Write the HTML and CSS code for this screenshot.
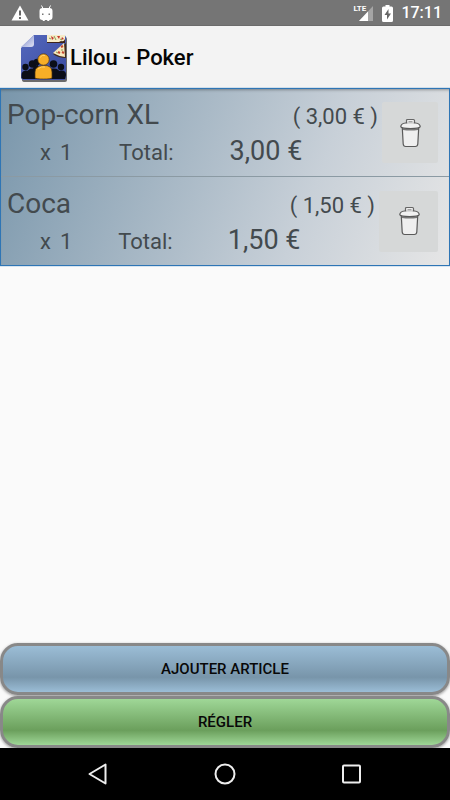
FILE: index.html
```html
<!DOCTYPE html>
<html lang="fr">
<head>
<meta charset="utf-8">
<meta name="viewport" content="width=device-width, initial-scale=1">
<title>Lilou - Poker</title>
<link rel="stylesheet" href="styles.css">
</head>
<body>
<svg class="defs" aria-hidden="true">
  <symbol id="trash" viewBox="0 0 22 30">
    <path d="M7.500 6V2.500q0-1 1-1h6q1 0 1 1V6" fill="#eee" stroke="#666" stroke-width="1.200"/>
    <path d="M9.500 4.300h4" stroke="#555" stroke-width="1.600"/>
    <path d="M3.300 10l.9 16q.2 2.500 2.500 2.500h9.600q2.300 0 2.500-2.500l.9-16z" fill="#efefef" stroke="#5a5a5a" stroke-width="1.200"/>
    <path d="M4 11.200q7.500 1 15 0" fill="none" stroke="#777" stroke-width="1.600"/>
    <path d="M1.800 8.800q0-3.300 4.700-3.800h10q4.700.5 4.700 3.800-.7 1.700-9.700 1.700T1.800 8.800z" fill="#f1f1f1" stroke="#5a5a5a" stroke-width="1.200"/>
    <path d="M8.200 5h6.600" stroke="#f1f1f1" stroke-width="1.400"/>
  </symbol>
</svg>
<div class="screen">
  <div class="status">
    <div class="status-group">
      <svg width="18" height="16" viewBox="0 0 18 16"><path d="M9 .5L17.500 15.500H.5z" fill="#fff"/><path d="M8 5.500h2v5H8zM8 12h2v2H8z" fill="#666"/></svg>
      <svg width="14" height="17" viewBox="0 0 14 17"><path d="M2.500.5l1.500 3M11.500.5L10 3.500" stroke="#fff"/><path d="M.5 6q0-3 3-3h7q3 0 3 3v6q0 3-3 3l-.5 1H8.500l-.5-1H6l-.5 1H4l-.5-1q-3 0-3-3z" fill="#fff"/><path d="M3 8.500h1.500V10H3zM9.500 8.500H11V10H9.500z" fill="#777"/></svg>
    </div>
    <div class="status-group status-right">
      <span class="signal"><svg width="14" height="15" viewBox="0 0 14 15"><path d="M14 0v15H0z" fill="#a5a5a5"/><path d="M9 5.500V15H0z" fill="#fff"/></svg><span class="lte">LTE</span></span>
      <svg width="11" height="17" viewBox="0 0 11 17"><path d="M3.500 0h4v1.500h2q1.500 0 1.500 1.500v12.500q0 1.500-1.500 1.500h-8Q0 17 0 15.500V3q0-1.500 1.500-1.500h2z" fill="#fff"/><path d="M6.500 4L2.500 10H5v4.500l4-6H6.500z" fill="#666"/></svg>
      <span class="clock">17:11</span>
    </div>
  </div>
  <header class="header">
    <svg class="logo" width="48" height="48" viewBox="0 0 48 48">
      <defs>
        <linearGradient id="blue" x2="1" y2="1"><stop stop-color="#5468bd"/><stop offset="1" stop-color="#3b4ca0"/></linearGradient>
        <linearGradient id="fold" x1="1" y1="1" x2="0" y2="0"><stop offset=".1" stop-color="#d6daf0"/><stop offset=".8" stop-color="#8c98d0"/></linearGradient>
      </defs>
      <path d="M14 3h31q2 0 2 2v41q0 2-2 2H5q-3 0-3-2V16z" fill="#222" opacity=".65"/>
      <path d="M14 1h29q3 0 3 3v39q0 3-3 3H4q-3 0-3-3V14z" fill="url(#blue)"/>
      <path d="M14 1v9q0 3-3 3H1z" fill="url(#fold)"/>
      <path d="M27 1h18v8H27z" fill="#3d241a"/>
      <path d="M27 1h18v4q-1 3-4 2l-2 1H27z" fill="#f6ecc8"/>
      <path d="M31 2l3 2-2 2zM37 2l3 0-1 3zM42 3l2 2-3 1z" fill="#c5372d"/><path d="M34 2l2 4M29 4l2 1M40 5l2 1" stroke="#8d9c55"/>
      <path d="M46 9L33 20q5 4 13 4z" fill="#412c1d"/>
      <path d="M44 9L33 19q5 3 12 4z" fill="#f8e8bd"/><path d="M41 13l2-1M38 18l2 1M42 18l2 1" stroke="#c5472f" stroke-width="2"/><path d="M41 16h2M36 18l2 1" stroke="#8d9c55"/>
      <g fill="#0b0e18"><circle cx="5.500" cy="33" r="3.200"/><path d="M1.500 44v-3q0-4 4-4.500T11 41v4H3z"/><circle cx="41" cy="33" r="3.200"/><path d="M35 45v-4q1-4 6-4.500t5 4.500l-1 4z"/><circle cx="12.500" cy="30" r="3.800"/><path d="M7 45v-5q0-5.500 5.500-5.500T19 40v5z"/><circle cx="33.500" cy="30" r="3.800"/><path d="M27 45v-5q0-5.500 6.500-5.500T40 40v5z"/><circle cx="17" cy="28" r="3.300"/><path d="M13 35q0-4 5-4l2 6z"/></g>
      <g fill="#f7ae27" stroke="#4a3210" stroke-width=".7"><circle cx="23.500" cy="25.500" r="5.700"/><path d="M15 44v-6q0-6 8.500-6.500T32 38v6q-1 1-8.500 1T15 44z"/></g>
      <path d="M20 23.500q2-3 5-2M18 35q3-3 7-2" fill="none" stroke="#ffd16b"/>
    </svg>
    <h1>Lilou - Poker</h1>
  </header>
  <main class="content">
    <ul class="orders">
      <li class="order">
        <div class="info">
          <div class="line"><span class="name">Pop-corn XL</span><span class="unit">( 3,00 € )</span></div>
          <div class="line totals"><span class="qty"><span>x</span><span>1</span></span><span class="label">Total:</span><span class="sum">3,00 €</span></div>
        </div>
        <button class="remove" type="button" aria-label="Supprimer Pop-corn XL"><svg width="22" height="30"><use href="#trash"/></svg></button>
      </li>
      <li class="order">
        <div class="info">
          <div class="line"><span class="name">Coca</span><span class="unit">( 1,50 € )</span></div>
          <div class="line totals"><span class="qty"><span>x</span><span>1</span></span><span class="label">Total:</span><span class="sum">1,50 €</span></div>
        </div>
        <button class="remove remove-wide" type="button" aria-label="Supprimer Coca"><svg width="22" height="30"><use href="#trash"/></svg></button>
      </li>
    </ul>
  </main>
  <div class="actions">
    <button class="action add" type="button">AJOUTER ARTICLE</button>
    <button class="action pay" type="button">RÉGLER</button>
  </div>
  <nav class="nav">
    <button type="button" aria-label="Retour"><svg width="22" height="22" viewBox="0 0 22 22"><path d="M18.500 1.500v19L2.500 11z"/></svg></button>
    <button type="button" aria-label="Accueil"><svg width="22" height="22" viewBox="0 0 22 22"><circle cx="11" cy="11" r="9.500"/></svg></button>
    <button type="button" aria-label="Applications récentes"><svg width="22" height="22" viewBox="0 0 22 22"><rect x="2" y="2.500" width="17" height="17" rx="1"/></svg></button>
  </nav>
</div>
</body>
</html>
```
FILE: styles.css
```css
* { box-sizing: border-box; }
body { margin: 0; background: #fafafa; font-family: Roboto, sans-serif; }
button { font: inherit; border: 0; padding: 0; cursor: pointer; }
svg { display: block; flex: none; }
.defs { position: absolute; width: 0; height: 0; }
.screen { display: flex; flex-direction: column; min-height: 100vh; }
.status { display: flex; justify-content: space-between; align-items: center; height: 26px; padding: 1px 8px 0 11px; background: #757575; border-bottom: 1px solid #6b6b6b; color: #fff; }
.status-group { display: flex; align-items: center; gap: 10px; }
.status-right { gap: 9px; }
.signal { position: relative; display: flex; padding-left: 5px; }
.lte { position: absolute; left: -1px; top: -1px; font-size: 8px; line-height: 8px; font-weight: 700; background: #757575; }
.clock { font-size: 16px; line-height: 20px; font-weight: 500; margin-left: -1px; }
.header { display: flex; align-items: center; height: 62px; padding: 1px 20px 0; background: #f3f3f3; }
.header h1 { margin: 0 0 0 2px; font-size: 22px; line-height: 28px; font-weight: 500; color: #050505; }
.content { flex: 1; }
.orders { list-style: none; margin: 0; padding: 0; border: 1px solid #2e75b5; background: linear-gradient(112deg, #7996ab 0%, #c8d0d8 68%, #e6e6e6 100%); box-shadow: 0 0 1px #2e75b5, inset 0 3px 3px -2px #0005; }
.order { display: flex; align-items: center; height: 87px; padding-right: 11px; color: #434a4e; }
.order + .order { height: 89px; border-top: 1px solid #8b9aa3; }
.info { flex: 1; padding-top: 5px; }
.line { display: flex; justify-content: space-between; align-items: baseline; height: 38px; padding: 0 4px 0 6px; }
.name { font-size: 28px; line-height: 36px; }
.unit { font-size: 22px; line-height: 32px; }
.totals { display: grid; grid-template-columns: 31% 29% 40%; padding: 0; }
.qty { display: flex; gap: 9px; padding-left: 39px; font-size: 22px; }
.label { font-size: 22px; }
.sum { font-size: 27px; }
.remove { display: flex; align-items: center; justify-content: center; width: 56px; height: 61px; border-radius: 2px; background: #d6d8d8; }
.remove-wide { width: 59px; }
.actions { display: grid; gap: 1px; }
.action { height: 52px; border: 3px solid #888; border-radius: 18px; font-size: 15px; font-weight: 500; color: #080808; box-shadow: 0 1px 3px #0006; }
.add { background: linear-gradient(#9bbdd6, #7895aa 68%, #9bbdd6); }
.pay { background: linear-gradient(#9fd797, #6b9f5c 68%, #9fd797); }
.nav { position: relative; display: flex; justify-content: center; gap: 105px; align-items: center; height: 52px; background: #000; }
.nav button { background: none; }
.nav svg { fill: none; stroke: #eee; stroke-width: 2; stroke-linejoin: round; }
```
